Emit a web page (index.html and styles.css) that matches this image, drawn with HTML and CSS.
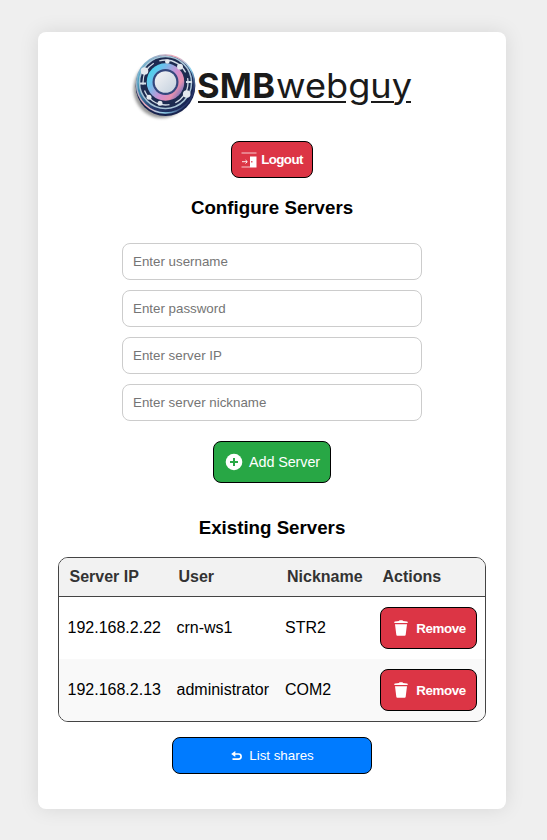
FILE: index.html
```html
<!DOCTYPE html>
<html lang="en">
<head>
<meta charset="utf-8">
<title>SMBwebguy</title>
<link rel="stylesheet" href="styles.css">
</head>
<body>
<main class="card">
  <svg class="logo" width="300" height="80" viewBox="0 0 300 80">
    <defs>
      <linearGradient id="rim" x1="0" y1="0.2" x2="1" y2="0.8"><stop offset="0" stop-color="#5fc6dc"/><stop offset=".25" stop-color="#3b7fa6"/><stop offset=".5" stop-color="#283d70"/><stop offset="1" stop-color="#16204c"/></linearGradient>
      <linearGradient id="edge" x1="0" y1="0" x2="1" y2=".6"><stop offset="0" stop-color="#49b6d8"/><stop offset=".5" stop-color="#f3a9b8"/><stop offset=".8" stop-color="#8fd4ee"/><stop offset="1" stop-color="#27356b"/></linearGradient>
      <linearGradient id="ring" x1="0" y1=".1" x2="1" y2=".8"><stop offset="0" stop-color="#35e0ea"/><stop offset=".3" stop-color="#6fbfee"/><stop offset=".6" stop-color="#d08fd0"/><stop offset=".8" stop-color="#e58fae"/><stop offset="1" stop-color="#5c6cc0"/></linearGradient>
      <linearGradient id="hub" x1="0" y1="0" x2="1" y2="1"><stop offset="0" stop-color="#f6f5f7"/><stop offset="1" stop-color="#c3d0dd"/></linearGradient>
      <filter id="soft" x="-20%" y="-20%" width="140%" height="140%"><feGaussianBlur stdDeviation="1.800"/></filter>
    </defs>
    <ellipse cx="39.500" cy="41" rx="28" ry="29" fill="#555" opacity=".6" filter="url(#soft)"/>
    <ellipse cx="43.500" cy="38" rx="29.800" ry="30" fill="#18234e"/>
    <circle cx="43.500" cy="36" r="29" fill="url(#rim)" stroke="url(#edge)" stroke-width="1.500"/>
    <circle cx="43.500" cy="34.500" r="26" fill="#1d2b50" stroke="#a9c5d7" stroke-width="1.500"/>
    <circle cx="43.500" cy="34.500" r="22.500" fill="none" stroke="#d2dce6" stroke-width="1.300" stroke-dasharray="25 6 31 6"/>
    <path d="M18 35.500h6M64 34h6" stroke="#d5e0ea" stroke-width="2"/>
    <circle cx="43.500" cy="34" r="18.800" fill="url(#ring)"/>
    <circle cx="43.500" cy="34" r="13" fill="#34477d"/>
    <circle cx="43.500" cy="34" r="10.800" fill="url(#hub)"/>
    <g fill="#e4e9ef"><circle cx="22.500" cy="23" r="3.800"/><circle cx="45.300" cy="13.500" r="2.300"/><circle cx="58" cy="18.700" r="3"/><circle cx="64.700" cy="46" r="3.800"/><circle cx="27" cy="49.300" r="2.500"/><circle cx="38" cy="55.300" r="2.500"/></g>
    <text class="logo-bold" x="75" y="50.300" textLength="78" lengthAdjust="spacing">SMB</text>
    <text class="logo-light" x="154" y="50.300" textLength="136" lengthAdjust="spacingAndGlyphs">webguy</text>
    <path d="M76 54H224M249 54h23M284 54h5" stroke="#1a1a1a" stroke-width="2"/>
  </svg>

  <button class="btn btn-danger logout">
    <svg width="16" height="16" viewBox="0 0 16 16" fill="none" stroke="#fff"><path d="M.5 1H15.500M.5 15H9" stroke-opacity=".75"/><path d="M1 9.700h5M4.500 8l1.800 1.700L4.500 11.500" stroke-width=".9"/><path d="M9 4.500h6.500v11H9z" fill="#fff" stroke="none"/><path d="M10.800 9v1.500" stroke="#dc3545" stroke-width="1.200"/></svg>
    <span>Logout</span>
  </button>

  <h3 class="title">Configure Servers</h3>
  <form class="form">
    <input type="text" placeholder="Enter username">
    <input type="password" placeholder="Enter password">
    <input type="text" placeholder="Enter server IP">
    <input type="text" placeholder="Enter server nickname">
    <button type="button" class="btn btn-success">
      <svg width="18" height="18" viewBox="0 0 18 18"><circle cx="9" cy="9" r="8.300" fill="#fff"/><path d="M9 5v8M5 9h8" stroke="#28a745" stroke-width="2"/></svg>
      <span>Add Server</span>
    </button>
  </form>

  <h3 class="title title-existing">Existing Servers</h3>
  <div class="table-box">
    <table>
      <colgroup><col class="c-ip"><col class="c-user"><col class="c-nick"><col></colgroup>
      <thead><tr><th>Server IP</th><th>User</th><th>Nickname</th><th>Actions</th></tr></thead>
      <tbody>
        <tr><td>192.168.2.22</td><td>crn-ws1</td><td>STR2</td><td><button class="btn btn-danger remove"><svg width="14" height="16" viewBox="0 0 14 16" fill="#fff"><path d="M.3 3V2Q.3 1.500 1 1.400L5 1 5.500.3h3L9 1l4 .4q.7.100.7.600v1zM1 4.200h12l-1.300 10.600q-.1.900-1 .9H3.300q-.9 0-1-.9z"/></svg><span>Remove</span></button></td></tr>
        <tr><td>192.168.2.13</td><td>administrator</td><td>COM2</td><td><button class="btn btn-danger remove"><svg width="14" height="16" viewBox="0 0 14 16" fill="#fff"><path d="M.3 3V2Q.3 1.500 1 1.400L5 1 5.500.3h3L9 1l4 .4q.7.100.7.600v1zM1 4.200h12l-1.300 10.600q-.1.900-1 .9H3.300q-.9 0-1-.9z"/></svg><span>Remove</span></button></td></tr>
      </tbody>
    </table>
  </div>

  <button class="btn btn-primary">
    <svg width="11" height="10" viewBox="0 0 11 10" fill="none" stroke="#fff" stroke-width="1.700"><path d="M2 3h5.500a2.600 2.600 0 0 1 0 5.200H1.500"/><path d="M4.300 0L.200 3l4.100 3z" fill="#fff" stroke="none"/></svg>
    <span>List shares</span>
  </button>
</main>
</body>
</html>
```

FILE: styles.css
```css
* { box-sizing: border-box; }

body {
  margin: 0;
  padding: 32px 41px 31px 38px;
  background: #efefef;
  font-family: "Liberation Sans", Arial, sans-serif;
  color: #000;
}

.card {
  height: 777px;
  padding: 16px 20px 20px;
  display: flex;
  flex-direction: column;
  align-items: center;
  background: #fff;
  border-radius: 8px;
  box-shadow: 0 0 20px rgba(0, 0, 0, 0.1);
}

.logo { flex: none; display: block; }
.logo text { fill: #1a1a1a; }
.logo-bold { font: 700 34.5px Inter, sans-serif; }
.logo-light { font: 400 33.5px Inter, sans-serif; }

.btn {
  flex: none;
  display: flex;
  align-items: center;
  justify-content: center;
  border: 1px solid #000;
  border-radius: 8px;
  color: #fff;
  font: 13.333px "Liberation Sans", Arial, sans-serif;
  padding: 0;
}
.btn-danger { background: #dc3545; font-weight: bold; }

.logout {
  width: 82px;
  height: 37px;
  margin-top: 13px;
  gap: 4px;
  letter-spacing: -0.6px;
}

.title {
  margin: 19px 0 0;
  font-size: 18.72px;
  line-height: 22px;
}
.title-existing { margin-top: 34px; }

.form {
  width: 300px;
  margin-top: 24px;
  display: flex;
  flex-direction: column;
  align-items: center;
  gap: 10px;
}

.form input {
  width: 300px;
  height: 37px;
  padding: 0 10px;
  border: 1px solid #ccc;
  border-radius: 8px;
  font: 13.333px "Liberation Sans", Arial, sans-serif;
}
.form input::placeholder { color: #757575; }

.btn-success {
  width: 118px;
  height: 42px;
  margin-top: 10px;
  gap: 6px;
  background: #28a745;
  font-size: 14.4px;
  letter-spacing: -0.1px;
  padding-left: 1px;
}

.table-box {
  width: 428px;
  margin-top: 18px;
  border: 1px solid #444;
  border-radius: 10px;
  overflow: hidden;
}

table {
  width: 426px;
  table-layout: fixed;
  border-collapse: separate;
  border-spacing: 0;
}
.c-ip { width: 109px; }
.c-user { width: 108.5px; }
.c-nick { width: 95.5px; }

th {
  height: 39px;
  padding: 0 0 1px 10.5px;
  border-bottom: 1px solid #444;
  background: #f2f2f2;
  color: #333;
  font-size: 16px;
  text-align: left;
}
td {
  height: 62px;
  padding: 0 8px;
  font-size: 16px;
  white-space: nowrap;
}
td:nth-child(-n+3) { padding-left: 8.5px; }
tbody tr:nth-child(even) { background: #f9f9f9; }

.remove {
  width: 97px;
  height: 42px;
  gap: 8px;
  padding-left: 3px;
  letter-spacing: -0.4px;
}

.btn-primary {
  width: 200px;
  height: 37px;
  margin-top: 15px;
  padding-left: 1px;
  gap: 7px;
  background: #007bff;
}
```
